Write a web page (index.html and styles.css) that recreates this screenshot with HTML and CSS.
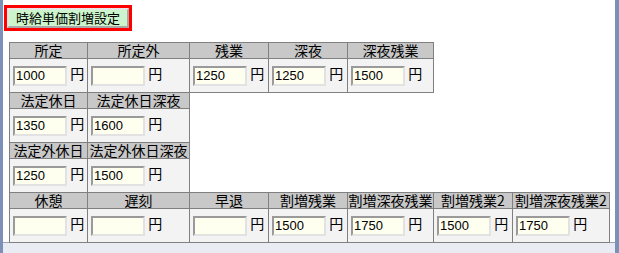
FILE: index.html
```html
<!DOCTYPE html>
<html lang="ja">
<head>
    <meta charset="UTF-8" />
    <title>時給単価割増設定</title>
    <link rel="stylesheet" href="styles.css">
</head>
<body>
<div class="window">
    <div class="frame">
        <div class="title-box">
            <button class="title-button" type="button">時給単価割増設定</button>
        </div>

        <table class="rate-table">
            <colgroup>
                <col class="c1"><col class="c2"><col class="c3"><col class="c4"><col class="c5"><col class="c6"><col class="c7">
            </colgroup>
            <tr class="head">
                <th>所定</th>
                <th>所定外</th>
                <th>残業</th>
                <th>深夜</th>
                <th>深夜残業</th>
                <td class="blank" colspan="2"></td>
            </tr>
            <tr class="data">
                <td><input type="text" value="1000"> 円</td>
                <td><input type="text" value=""> 円</td>
                <td><input type="text" value="1250"> 円</td>
                <td><input type="text" value="1250"> 円</td>
                <td><input type="text" value="1500"> 円</td>
                <td class="blank" colspan="2"></td>
            </tr>
            <tr class="head">
                <th>法定休日</th>
                <th>法定休日深夜</th>
                <td class="blank" colspan="5"></td>
            </tr>
            <tr class="data">
                <td><input type="text" value="1350"> 円</td>
                <td><input type="text" value="1600"> 円</td>
                <td class="blank" colspan="5"></td>
            </tr>
            <tr class="head">
                <th>法定外休日</th>
                <th>法定外休日深夜</th>
                <td class="blank" colspan="5"></td>
            </tr>
            <tr class="data">
                <td><input type="text" value="1250"> 円</td>
                <td><input type="text" value="1500"> 円</td>
                <td class="blank" colspan="5"></td>
            </tr>
            <tr class="head">
                <th>休憩</th>
                <th>遅刻</th>
                <th>早退</th>
                <th>割増残業</th>
                <th>割増深夜残業</th>
                <th>割増残業2</th>
                <th>割増深夜残業2</th>
            </tr>
            <tr class="data">
                <td><input type="text" value=""> 円</td>
                <td><input type="text" value=""> 円</td>
                <td><input type="text" value=""> 円</td>
                <td><input type="text" value="1500"> 円</td>
                <td><input type="text" value="1750"> 円</td>
                <td><input type="text" value="1500"> 円</td>
                <td><input type="text" value="1750"> 円</td>
            </tr>
        </table>
    </div>
</div>
</body>
</html>
```

FILE: styles.css
```css
* {
    margin: 0;
    padding: 0;
    box-sizing: border-box;
}
body {
    width: 619px;
    height: 253px;
    overflow: hidden;
    background-color: #e9ecf3;
    font-family: "Noto Sans CJK JP", "DejaVu Sans", sans-serif;
}
.window {
    height: 253px;
    border-left: 3px solid #7d90b8;
    border-right: 4px solid #7d90b8;
}
.frame {
    height: 243px;
    background-color: #fff;
    border-bottom: 1px solid #9aa2b4;
    padding: 4px 0 0 1px;
}
.title-box {
    display: inline-block;
    border: 3px solid #f00;
    height: 26px;
}
.title-button {
    display: block;
    height: 20px;
    padding: 0 7px;
    background-color: #ccf5cc;
    border: 2px solid;
    border-color: #e6e6e6 #a8a8a8 #a8a8a8 #e6e6e6;
    font-family: "Noto Sans CJK JP", sans-serif;
    font-size: 13px;
    line-height: 16px;
    color: #000;
}
.rate-table {
    margin: 11px 0 0 5px;
    width: 600px;
    table-layout: fixed;
    border-collapse: collapse;
}
.c1 { width: 78px; }
.c2 { width: 102px; }
.c3 { width: 79px; }
.c4 { width: 79px; }
.c5 { width: 86px; }
.c6 { width: 79px; }
.c7 { width: 97px; }

.rate-table tr.head {
    height: 16px;
}
.rate-table tr.data {
    height: 34px;
}
.rate-table th {
    padding: 0;
    border: 1px solid #808080;
    background-color: #c8c8c8;
    font-weight: normal;
    font-size: 14px;
    line-height: 15px;
    text-align: center;
    white-space: nowrap;
}
.rate-table td {
    padding: 0 0 0 3px;
    border: 1px solid #808080;
    background-color: #f3f3f3;
    font-size: 14px;
    line-height: 16px;
    vertical-align: middle;
    white-space: nowrap;
}
.rate-table .head td.blank {
    line-height: 15px;
}
.rate-table td.blank {
    border: none;
    background-color: #fff;
}
.rate-table input {
    width: 54px;
    height: 20px;
    vertical-align: middle;
    border: 2px solid;
    border-color: #9a9a9a #e2e2e2 #e2e2e2 #9a9a9a;
    background-color: #fffff0;
    font-family: "Liberation Sans", Arial, sans-serif;
    font-size: 13px;
    padding: 0 1px;
    color: #000;
}
```
